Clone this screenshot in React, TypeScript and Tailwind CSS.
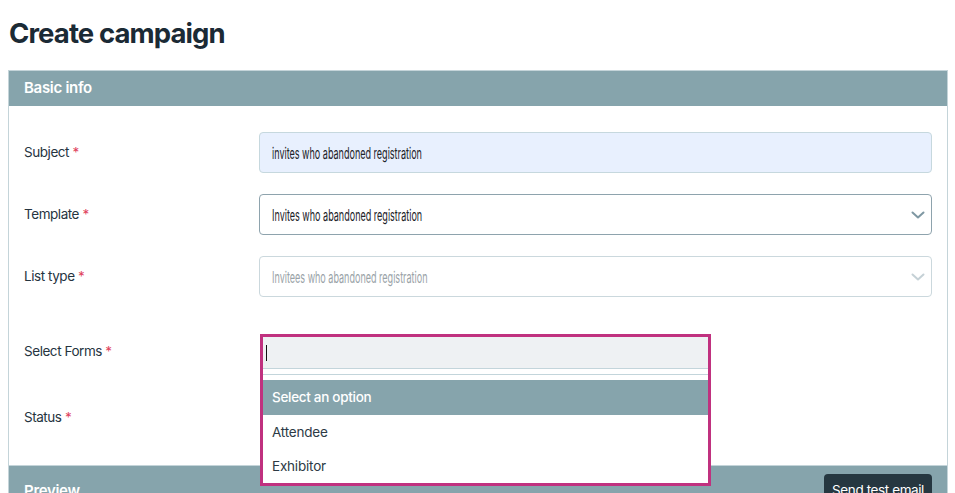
import React from "react";

const Chevron = ({ light }: { light?: boolean }) => (
  <svg width="14" height="8" viewBox="0 0 14 8" fill="none" className="shrink-0">
    <path d="M1.5 1.5 L7 6.5 L12.5 1.5" stroke={light ? "#c5d1d6" : "#7f98a3"} strokeWidth="2" strokeLinecap="round" strokeLinejoin="round" />
  </svg>
);

const Label = ({ text }: { text: string }) => (
  <div className="w-[235px] shrink-0 text-[13.5px] tracking-[-0.45px] text-[#26343f]">
    {text} <span className="text-[#e0435d]">*</span>
  </div>
);

const Condensed = ({ children, className }: { children: React.ReactNode; className?: string }) => (
  <span className={"inline-block origin-left scale-x-[0.565] whitespace-nowrap text-[16px] " + (className ?? "")}>{children}</span>
);

export default function App() {
  return (
    <div className="min-h-[493px] w-[955px] overflow-hidden bg-white" style={{ fontFamily: "Inter, 'Noto Sans', sans-serif" }}>
      <h1 className="pl-[9px] pt-[15px] text-[27.5px] font-bold leading-[36px] tracking-[-0.9px] text-[#1b2a35]">Create campaign</h1>
      <div className="ml-[8px] mt-[19px] w-[940px] border border-[#c4d4d9]">
        <div className="flex h-[35px] items-center bg-[#86a4ac] px-[15px] text-[15px] font-semibold tracking-[-0.3px] text-white">Basic info</div>
        <div className="px-[15px] pb-[15px] pt-[26px]">
          <div className="flex h-[41px] items-center">
            <Label text="Subject" />
            <div className="flex h-[41px] flex-1 items-center overflow-hidden rounded-[4px] border border-[#c6d8de] bg-[#e8f0fe] px-[12px]">
              <Condensed className="text-[#1d2329]">invites who abandoned registration</Condensed>
            </div>
          </div>
          <div className="mt-[21px] flex h-[41px] items-center">
            <Label text="Template" />
            <div className="flex h-[41px] flex-1 items-center justify-between overflow-hidden rounded-[4px] border border-[#8ea3ad] bg-white pl-[12px] pr-[6px]">
              <Condensed className="text-[#1d2329]">Invites who abandoned registration</Condensed>
              <Chevron />
            </div>
          </div>
          <div className="mt-[21px] flex h-[41px] items-center">
            <Label text="List type" />
            <div className="flex h-[41px] flex-1 items-center justify-between overflow-hidden rounded-[4px] border border-[#cbd8dd] bg-white pl-[12px] pr-[6px]">
              <Condensed className="text-[#9aa3a8]">Invitees who abandoned registration</Condensed>
              <Chevron light />
            </div>
          </div>
          <div className="relative mt-[21px] flex h-[66px] items-center">
            <Label text="Select Forms" />
            <div className="absolute left-[236px] top-[16px] z-10 w-[451px] border-[3px] border-[#c0317f] bg-white">
              <div className="flex h-[32px] items-center border-b border-[#c3d5db] bg-[#eef1f3] pl-[3px]">
                <span className="h-[16px] w-px bg-[#111]" />
              </div>
              <div className="mt-[5px] h-px bg-[#c3d5db]" />
              <div className="mt-[5px] flex h-[35px] items-center bg-[#86a4ac] pl-[9px] text-[13.5px] font-medium tracking-[-0.3px] text-white">Select an option</div>
              <div className="flex h-[35px] items-center pl-[9px] text-[13.5px] tracking-[-0.2px] text-[#2d3a45]">Attendee</div>
              <div className="flex h-[33px] items-center pl-[9px] text-[13.5px] tracking-[-0.2px] text-[#2d3a45]">Exhibitor</div>
            </div>
          </div>
          <div className="flex h-[66px] items-center">
            <Label text="Status" />
          </div>
        </div>
        <div className="flex h-[40px] items-start justify-between border-t border-[#c4d4d9] bg-[#86a4ac] pl-[15px] pr-[15px] pt-[8px]">
          <div className="pt-[6px] text-[15px] font-semibold tracking-[-0.3px] text-white">Preview</div>
          <button className="h-[32px] rounded-[4px] bg-[#263740] px-[8px] text-[13.5px] tracking-[-0.4px] text-white">Send test email</button>
        </div>
      </div>
    </div>
  );
}
